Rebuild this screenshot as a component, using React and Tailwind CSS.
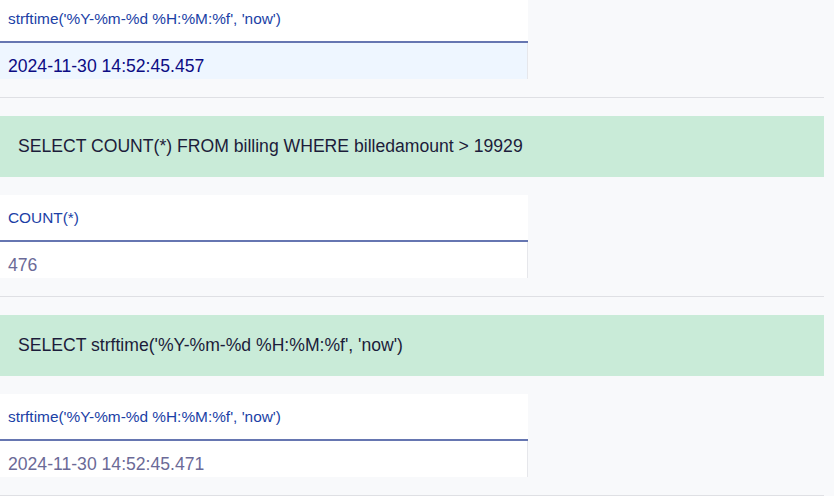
const sections = [
  {
    query: null,
    header: "strftime('%Y-%m-%d %H:%M:%f', 'now')",
    value: "2024-11-30 14:52:45.457",
    active: true,
  },
  {
    query: "SELECT COUNT(*) FROM billing WHERE billedamount > 19929",
    header: "COUNT(*)",
    value: "476",
  },
  {
    query: "SELECT strftime('%Y-%m-%d %H:%M:%f', 'now')",
    header: "strftime('%Y-%m-%d %H:%M:%f', 'now')",
    value: "2024-11-30 14:52:45.471",
  },
];

function ResultTable({ header, value, active }) {
  return (
    <div className="w-[528px] flex flex-col bg-white">
      <div className="h-[45px] px-2 flex items-center text-[15.4px] text-[#1b3fa6]">
        {header}
      </div>
      <div className="h-[2px] bg-[#6676b1]" />
      <div
        className={`h-[36px] px-2 pt-[12px] overflow-hidden text-[17.6px] leading-[22px] border-r border-[#e6e7eb] ${
          active ? "bg-[#eef6ff] text-[#0c0c84]" : "bg-white text-[#6b6a97]"
        }`}
      >
        {value}
      </div>
    </div>
  );
}

export default function App() {
  return (
    <div
      className="min-h-screen bg-[#f8f9fb] pr-[10px] overflow-hidden"
      style={{ fontFamily: '"Liberation Sans", Arial, sans-serif' }}
    >
      <div className="-mt-[4px] flex flex-col">
        {sections.map((s, i) => (
          <div key={i} className="flex flex-col">
            {s.query && (
              <div className="h-[61px] mt-[18px] mb-[18px] flex items-center px-[18px] bg-[#c9ebd8] text-[17.6px] text-[#1c1c3a]">
                {s.query}
              </div>
            )}
            <ResultTable header={s.header} value={s.value} active={s.active} />
            <div className="mt-[18px] h-[1px] bg-[#dfe0e4]" />
          </div>
        ))}
      </div>
    </div>
  );
}
